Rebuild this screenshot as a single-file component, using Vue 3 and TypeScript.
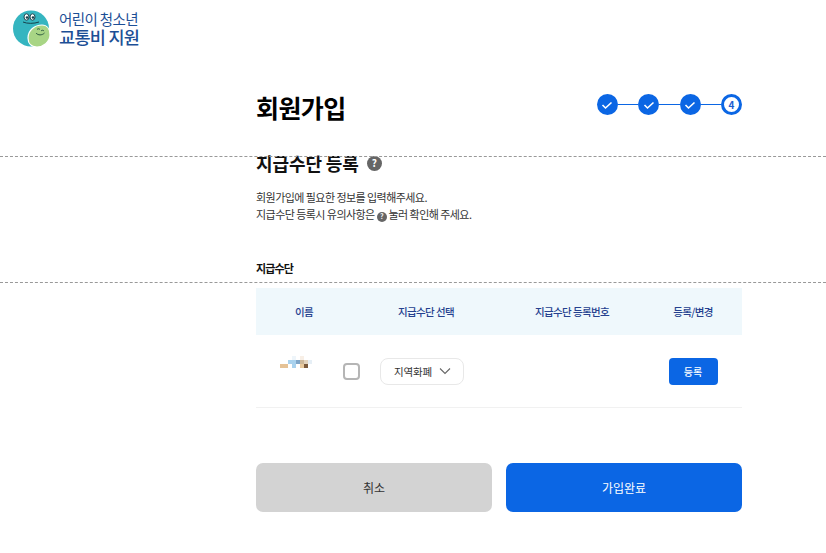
<script setup lang="ts">
const columns: string[] = ['이름', '지급수단 선택', '지급수단 등록번호', '등록/변경']
const mosaic: [number, number, number, number, string][] = [
  [12, 0, 4, 4, '#eef5fa'], [20, 0, 4, 4, '#f8efe6'],
  [8, 4, 8, 4, '#a9d2ee'], [16, 4, 4, 4, '#7fa6c8'], [20, 4, 4, 4, '#cdb89a'], [24, 4, 4, 4, '#e3d3bd'], [28, 4, 4, 4, '#e6eff6'],
  [0, 8, 8, 4, '#e5c296'], [12, 8, 4, 4, '#a9d2ee'], [20, 8, 4, 4, '#e9c99c'], [24, 8, 4, 4, '#7b5a3c'],
]
</script>

<template>
  <div class="page">
    <header class="logo">
      <svg class="mark" width="38" height="38" viewBox="0 0 38 38">
        <circle cx="18" cy="18.500" r="18" fill="#35b5c0" />
        <path d="M15 28C15 20 22 15 29 15C34 15 37 19 37 25C37 32 30 37 24 37C18 37 15 33 15 28z" fill="#a8d585" stroke="#fff" stroke-width="1.200" />
        <ellipse cx="13.500" cy="7" rx="2.500" ry="3.200" fill="#fff" stroke="#17424c" stroke-width="1" />
        <ellipse cx="19.500" cy="7" rx="2.500" ry="3.200" fill="#fff" stroke="#17424c" stroke-width="1" />
        <circle cx="14" cy="7.500" r="1.300" fill="#17424c" />
        <circle cx="20" cy="7.500" r="1.300" fill="#17424c" />
        <path d="M10 12c4 1.800 11 1.800 16 0" fill="none" stroke="#17424c" stroke-width="1" />
        <path d="M24 19.500c1-1 2-1 3 0M28 21c1-1 2-1 3 0M23 23c2 2.500 6 2.500 8.500 0" fill="none" stroke="#2c5a40" stroke-width="1" />
      </svg>
      <div class="logo-text">
        <span class="logo-top">어린이 청소년</span>
        <span class="logo-bottom">교통비 지원</span>
      </div>
    </header>

    <main class="main">
      <div class="title-row">
        <h1 class="title">회원가입</h1>
        <div class="steps">
          <template v-for="n in 3" :key="n">
            <span class="step done">
              <svg width="12" height="10" viewBox="0 0 12 10"><path d="M1.500 5l3 3 6-5.500" fill="none" stroke="#fff" stroke-width="1.600" /></svg>
            </span>
            <span class="link"></span>
          </template>
          <span class="step current">4</span>
        </div>
      </div>

      <h2 class="sub">지급수단 등록 <span class="help big">?</span></h2>
      <p class="desc">회원가입에 필요한 정보를 입력해주세요.<br />지급수단 등록시 유의사항은 <span class="help small">?</span> 눌러 확인해 주세요.</p>

      <h3 class="label">지급수단</h3>

      <div class="thead">
        <div v-for="c in columns" :key="c" class="th">{{ c }}</div>
      </div>
      <div class="trow">
        <div class="td">
          <svg class="mosaic" width="32" height="12" viewBox="0 0 32 12" shape-rendering="crispEdges">
            <rect v-for="(m, i) in mosaic" :key="i" :x="m[0]" :y="m[1]" :width="m[2]" :height="m[3]" :fill="m[4]" />
          </svg>
        </div>
        <div class="td pick">
          <span class="check"></span>
          <div class="select">
            <span class="select-text">지역화폐</span>
            <svg width="12" height="8" viewBox="0 0 12 8"><path d="M1 1.500l5 5 5-5" fill="none" stroke="#666" stroke-width="1.100" /></svg>
          </div>
        </div>
        <div class="td"></div>
        <div class="td"><button class="reg" type="button">등록</button></div>
      </div>

      <div class="actions">
        <button class="btn cancel" type="button">취소</button>
        <button class="btn ok" type="button">가입완료</button>
      </div>
    </main>

    <div class="dash d1"></div>
    <div class="dash d2"></div>
  </div>
</template>

<style>
html, body { margin: 0; background: #fff; }
</style>

<style scoped>
.page {
  position: relative;
  width: 826px;
  height: 553px;
  overflow: hidden;
  font-family: "Noto Sans CJK KR", "Noto Sans", sans-serif;
  color: #111;
}
.logo { display: flex; align-items: center; gap: 8px; padding: 9px 0 0 13px; height: 40px; }
.mark { flex: none; }
.logo-text { display: flex; flex-direction: column; color: #1c4f96; margin-top: -2px; }
.logo-top { font-size: 14.500px; font-weight: 400; letter-spacing: -0.6px; line-height: 17px; }
.logo-bottom { font-size: 17.500px; font-weight: 500; letter-spacing: -0.7px; line-height: 19px; }
.main { width: 486px; margin: 33px 0 0 256px; }
.title-row { display: flex; justify-content: space-between; height: 75px; padding-top: 5px; align-items: flex-start; }
.title { margin: 0; font-size: 25px; font-weight: 700; line-height: 40px; letter-spacing: -0.6px; color: #000; }
.steps { display: flex; align-items: center; margin-top: 7px; }
.step { width: 21px; height: 21px; border-radius: 50%; display: flex; align-items: center; justify-content: center; box-sizing: border-box; flex: none; }
.done { background: #0b66e4; }
.current { border: 3px solid #0b66e4; color: #1c5fd0; font-size: 10px; font-weight: 700; background: #fff; }
.link { width: 20.500px; height: 1px; background: #0b66e4; }
.sub { margin: -14px 0 0; font-size: 18px; font-weight: 700; line-height: 30px; display: flex; align-items: center; gap: 8px; letter-spacing: -0.1px; }
.help { display: inline-flex; align-items: center; justify-content: center; border-radius: 50%; background: #666; color: #fff; font-weight: 700; }
.big { width: 15px; height: 15px; font-size: 10px; }
.small { width: 10px; height: 10px; font-size: 7px; vertical-align: 0; }
.desc { margin: 11px 0 0; font-size: 11px; line-height: 17px; color: #333; letter-spacing: -0.55px; }
.label { margin: 35px 0 0; font-size: 11px; font-weight: 700; line-height: 20px; color: #111; letter-spacing: -0.9px; }
.thead, .trow { display: grid; grid-template-columns: 96px 148px 144px 98px; }
.thead { margin-top: 10px; height: 47px; background: #eff8fc; align-items: center; }
.th { text-align: center; font-size: 10.500px; font-weight: 500; color: #25418f; letter-spacing: -0.6px; }
.trow { height: 72px; border-bottom: 1px solid #f1f1f1; align-items: center; }
.td { display: flex; justify-content: center; align-items: center; }
.mosaic { margin: -19px 16px 0 0; }
.pick { justify-content: flex-start; gap: 20px; margin-left: -9px; }
.check { width: 17px; height: 17px; border: 2px solid #b5b5b5; border-radius: 4px; box-sizing: border-box; flex: none; background: #fff; }
.select { width: 84px; height: 27px; box-sizing: border-box; border: 1px solid #e8e8e8; border-radius: 8px; display: flex; align-items: center; justify-content: space-between; padding: 0 12px 0 13px; }
.select-text { font-size: 10.500px; color: #333; letter-spacing: -0.2px; }
.reg { width: 49px; height: 27px; border: 0; border-radius: 4px; background: #0b66e4; color: #fff; font: 500 10px "Noto Sans CJK KR", sans-serif; padding: 0; margin-top: 1px; }
.actions { display: flex; justify-content: space-between; margin-top: 55px; }
.btn { width: 236px; height: 49px; border: 0; border-radius: 7px; font: 400 12px "Noto Sans CJK KR", sans-serif; padding: 0; }
.cancel { background: #d3d3d3; color: #333; }
.ok { background: #0b66e4; color: #fff; }
.dash { position: absolute; left: 0; right: 0; height: 0; border-top: 1px dashed #999; }
.d1 { top: 156px; }
.d2 { top: 282px; }
</style>
